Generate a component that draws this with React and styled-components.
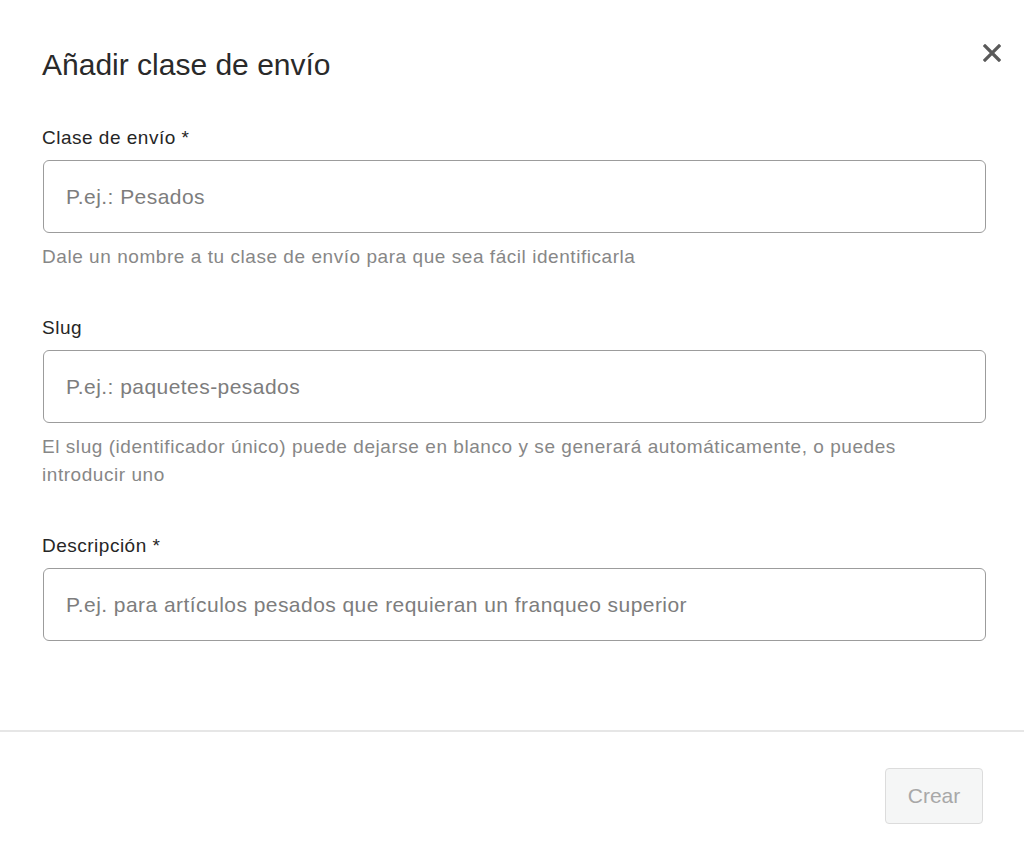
import React from "react";
import styled, { createGlobalStyle } from "styled-components";

const GlobalStyle = createGlobalStyle`
  html, body {
    margin: 0;
    padding: 0;
    background: #ffffff;
  }
  body {
    font-family: "Liberation Sans", Arial, Helvetica, sans-serif;
    color: #222;
  }
  * {
    box-sizing: border-box;
  }
`;

const Modal = styled.div`
  width: 1024px;
  height: 845px;
  display: flex;
  flex-direction: column;
  background: #fff;
`;

const Header = styled.div`
  display: flex;
  justify-content: space-between;
  align-items: flex-start;
  padding: 47px 22px 0 42px;
`;

const Title = styled.h2`
  margin: 0;
  font-size: 30px;
  line-height: 36px;
  font-weight: 400;
  color: #2a2a2a;
`;

const CloseButton = styled.button`
  display: flex;
  align-items: center;
  justify-content: center;
  width: 20px;
  height: 20px;
  margin-top: -4px;
  padding: 0;
  border: none;
  background: none;
  color: #5a5a5a;
  cursor: pointer;
`;

const Body = styled.div`
  flex: 1;
  display: flex;
  flex-direction: column;
  gap: 45px;
  padding: 43px 38px 0 43px;
`;

const Field = styled.div`
  display: flex;
  flex-direction: column;
`;

const Label = styled.label`
  font-size: 19px;
  letter-spacing: 0.5px;
  line-height: 24px;
  color: #262626;
  margin-left: -1px;
`;

const Input = styled.input`
  margin-top: 10px;
  width: 100%;
  height: 73px;
  padding: 0 22px;
  border: 1.5px solid #9c9c9c;
  border-radius: 6px;
  font-family: inherit;
  font-size: 21px;
  letter-spacing: 0.45px;
  color: #222;
  outline: none;
  background: #fff;

  &::placeholder {
    color: #7d7d7d;
  }
`;

const Help = styled.p`
  margin: 10px 0 0 -1px;
  font-size: 19px;
  letter-spacing: 0.55px;
  line-height: 28px;
  color: #878787;
  padding-right: 40px;
`;

const Divider = styled.hr`
  margin: 0;
  border: none;
  border-top: 2px solid #e6e6e6;
`;

const Footer = styled.div`
  display: flex;
  justify-content: flex-end;
  padding: 36px 41px 21px 0;
`;

const Button = styled.button`
  width: 98px;
  height: 56px;
  border: 1.5px solid #dcdcdc;
  border-radius: 4px;
  background: #f5f6f6;
  font-family: inherit;
  font-size: 21px;
  color: #a8a8a8;
  cursor: not-allowed;
`;

const fields = [
  {
    id: "name",
    label: "Clase de envío *",
    placeholder: "P.ej.: Pesados",
    help: "Dale un nombre a tu clase de envío para que sea fácil identificarla",
  },
  {
    id: "slug",
    label: "Slug",
    placeholder: "P.ej.: paquetes-pesados",
    help: "El slug (identificador único) puede dejarse en blanco y se generará automáticamente, o puedes introducir uno",
  },
  {
    id: "desc",
    label: "Descripción *",
    placeholder: "P.ej. para artículos pesados que requieran un franqueo superior",
  },
];

const CloseIcon = () => (
  <svg width="18" height="18" viewBox="0 0 18 18" fill="none">
    <path
      d="M2 2L16 16M16 2L2 16"
      stroke="currentColor"
      strokeWidth="3.2"
      strokeLinecap="square"
    />
  </svg>
);

const App = () => {
  return (
    <>
      <GlobalStyle />
      <Modal>
        <Header>
          <Title>Añadir clase de envío</Title>
          <CloseButton aria-label="Cerrar">
            <CloseIcon />
          </CloseButton>
        </Header>
        <Body>
          {fields.map((f) => (
            <Field key={f.id}>
              <Label htmlFor={f.id}>{f.label}</Label>
              <Input id={f.id} placeholder={f.placeholder} />
              {f.help && <Help>{f.help}</Help>}
            </Field>
          ))}
        </Body>
        <Divider />
        <Footer>
          <Button disabled>Crear</Button>
        </Footer>
      </Modal>
    </>
  );
};

export default App;
